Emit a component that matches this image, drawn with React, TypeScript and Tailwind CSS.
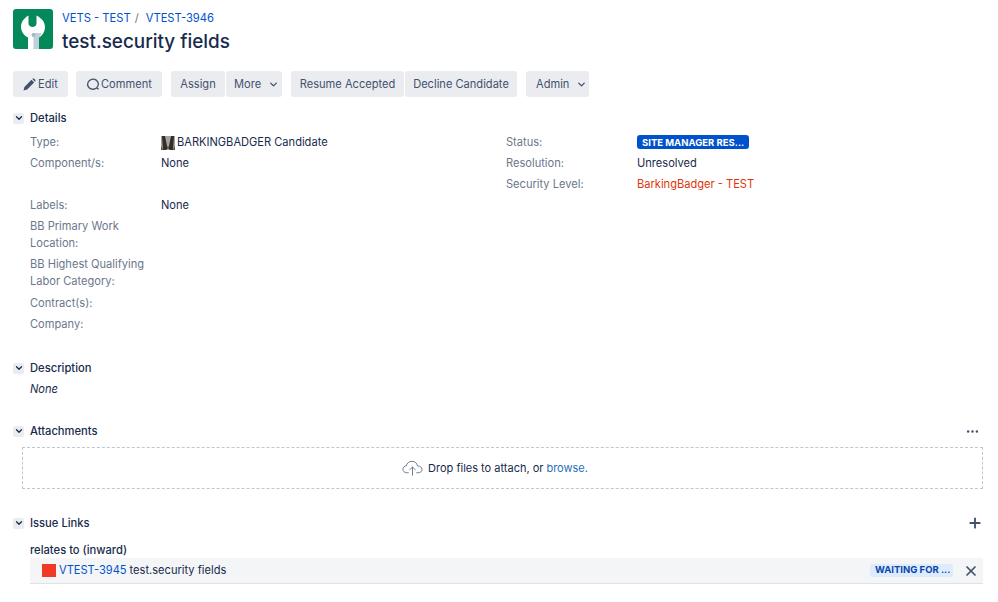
import React from 'react';
import { ChevronDown, MoreHorizontal, Plus, X } from 'lucide-react';

const btn = 'h-[26px] flex items-center bg-[#ebecf0] text-[#42526e] rounded-[3px] text-[11.1px]';

const SectionHead = ({ title, right }: { title: string; right?: React.ReactNode }) => (
  <div className="h-[18px] flex items-center">
    <div className="w-[11px] h-[11px] bg-[#ebecf0] rounded-[2px] flex items-center justify-center">
      <ChevronDown size={10} strokeWidth={3} className="text-[#172b4d]" />
    </div>
    <h2 className="ml-[6px] text-[11.2px] font-medium text-[#172b4d]">{title}</h2>
    <div className="ml-auto">{right}</div>
  </div>
);

const Field = ({ label, children, className }: { label: React.ReactNode; children?: React.ReactNode; className?: string }) => (
  <div className={`flex leading-[17px] text-[11.1px] ${className ?? ''}`}>
    <div className="w-[131px] shrink-0 text-[#6b778c]">{label}</div>
    <div className="text-[#172b4d]">{children}</div>
  </div>
);

const App: React.FC = () => {
  return (
    <div className="w-[998px] h-[602px] overflow-hidden bg-white font-['Inter',sans-serif] pl-[13px] pr-[15px] pt-[9px]">
      <header className="flex">
        <div className="w-[40px] h-[40px] rounded-[3px] bg-[#04895a] overflow-hidden">
          <svg viewBox="0 0 40 40" width="40" height="40">
            <path d="M15 40V28.500C11 26.500 8 22.500 8 18C8 13 11 9 15.500 6.500V14.500C15.500 16.500 17.500 18 19.500 18C21.500 18 23.500 16.500 23.500 14.500V6.500C28.500 9 32 13 32 18C32 22.500 29.500 26.500 26 28.500V40Z" fill="#fff" />
            <path d="M20.500 40V24H28.500C27.700 26 27 27.700 26 28.500V40Z" fill="#c1d0da" />
            <circle cx="20.500" cy="26" r="2" fill="#a5b8c5" />
          </svg>
        </div>
        <div className="ml-[9px]">
          <div className="h-[18px] flex items-center text-[11.2px] text-[#0052cc]">
            <span>VETS - TEST</span>
            <span className="ml-[4px] text-[#6b778c]">/</span>
            <span className="ml-[7px]">VTEST-3946</span>
          </div>
          <h1 className="mt-[3px] text-[18.9px] leading-[24px] font-medium text-[#172b4d]">test.security fields</h1>
        </div>
      </header>

      <div className="mt-[17px] flex">
        <button className={`${btn} w-[55px] pl-[10px]`}>
          <svg viewBox="0 0 12 12" width="13" height="13" className="mr-[2px]" fill="#42526e">
            <path d="M0.500 11.500L1.300 8.200L7.800 1.700L10.300 4.200L3.800 10.700ZM8.600 0.900C9.200 0.300 10 0.300 10.600 0.900L11.100 1.400C11.700 2 11.700 2.800 11.100 3.400L8.600 0.900Z" />
          </svg>
          Edit
        </button>
        <button className={`${btn} ml-[8px] w-[86px] pl-[10px]`}>
          <svg viewBox="0 0 13 13" width="14" height="14" className="mr-[1px]" fill="none" stroke="#42526e" strokeWidth="1.200">
            <path d="M9.800 10.200A5 4.700 0 1 1 11.500 6.500C11.500 7.800 11 9 9.800 10.200L11.800 11.400" />
          </svg>
          Comment
        </button>
        <button className={`${btn} ml-[9px] w-[54px] justify-center`}>Assign</button>
        <button className={`${btn} ml-px w-[56px] pl-[8px]`}>
          More
          <ChevronDown size={11} strokeWidth={3} className="ml-[7px]" />
        </button>
        <button className={`${btn} ml-[9px] w-[113px] justify-center`}>Resume Accepted</button>
        <button className={`${btn} ml-px w-[112px] justify-center`}>Decline Candidate</button>
        <button className={`${btn} ml-[9px] w-[63px] pl-[10px]`}>
          Admin
          <ChevronDown size={11} strokeWidth={3} className="ml-[7px]" />
        </button>
      </div>

      <section className="mt-[12px]">
        <SectionHead title="Details" />
        <div className="mt-[7px] ml-[17px] flex">
          <div className="w-[476px] flex flex-col gap-[4px]">
            <Field label="Type:">
              <span className="flex items-center">
                <svg viewBox="0 0 14 14" width="14" height="14" className="mr-[2px]">
                  <rect width="14" height="14" fill="#a8a29c" />
                  <path d="M1 0H4L6 10L7 12L5 14H2Z" fill="#332d29" />
                  <path d="M13 0H10L8 10L7 12L9 14H12Z" fill="#332d29" />
                  <path d="M0 10L2 14H0ZM14 10L12 14H14Z" fill="#5a4f47" />
                </svg>
                BARKINGBADGER Candidate
              </span>
            </Field>
            <Field label="Component/s:">None</Field>
            <Field label="Labels:" className="mt-[21px]">None</Field>
            <Field label={<>BB Primary Work<br />Location:</>} />
            <Field label={<>BB Highest Qualifying<br />Labor Category:</>} />
            <Field label="Contract(s):" className="mt-px" />
            <Field label="Company:" />
          </div>
          <div className="flex flex-col gap-[4px]">
            <Field label="Status:">
              <span className="flex items-center w-[112px] h-[14px] mt-px pl-[5px] rounded-[3px] bg-[#0052cc] text-white text-[9.5px] font-bold whitespace-nowrap">SITE MANAGER RES...</span>
            </Field>
            <Field label="Resolution:">Unresolved</Field>
            <Field label="Security Level:"><span className="text-[#de350b]">BarkingBadger - TEST</span></Field>
          </div>
        </div>
      </section>

      <section className="mt-[26px]">
        <SectionHead title="Description" />
        <p className="mt-[4px] ml-[17px] text-[11.1px] leading-[17px] italic text-[#172b4d]">None</p>
      </section>

      <section className="mt-[24px]">
        <SectionHead title="Attachments" right={<MoreHorizontal size={15} className="text-[#42526e] mr-[3px]" />} />
        <div className="mt-[7px] ml-[9px] h-[42px] pr-[15px] border border-dashed border-[#c1c7d0] flex items-center justify-center text-[11px] text-[#172b4d]">
          <svg viewBox="0 0 22 16" width="21" height="16" fill="none" stroke="#6b778c" strokeWidth="1" className="mr-[5px]">
            <path d="M7 13H5C2.5 13 1 11.300 1 9.300C1 7.300 2.500 5.800 4.500 5.800C5 3 7.500 1 10.500 1C13.500 1 15.700 3 16.200 5.800C18.800 5.800 21 7.300 21 9.500C21 11.500 19.300 13 17 13H15" />
            <path d="M11 16V7M7.800 10L11 7L14.200 10" />
          </svg>
          Drop files to attach, or
          <a className="ml-[3px] text-[#2a6ebb]">browse.</a>
        </div>
      </section>

      <section className="mt-[25px]">
        <SectionHead title="Issue Links" right={<Plus size={16} strokeWidth={2.8} className="text-[#42526e]" />} />
        <div className="mt-[10px] ml-[17px] text-[11.2px] leading-[16px] font-medium text-[#172b4d]">relates to (inward)</div>
        <div className="ml-[17px] h-[26px] flex items-center bg-[#f4f5f7] border-b border-[#dfe1e6] text-[11.1px] text-[#172b4d]">
          <span className="ml-[12px] w-[14px] h-[13px] bg-[#f03a25]" />
          <a className="ml-[3px] text-[#0052cc]">VTEST-3945</a>
          <span className="ml-[3px]">test.security fields</span>
          <span className="ml-auto h-[13px] w-[83px] pl-[5px] flex items-center rounded-[3px] bg-[#deebff] text-[#0747a6] text-[9.5px] font-bold whitespace-nowrap">WAITING FOR ...</span>
          <X size={16} strokeWidth={2.6} className="ml-[10px] mr-[4px] text-[#42526e]" />
        </div>
      </section>
    </div>
  );
};

export default App;
